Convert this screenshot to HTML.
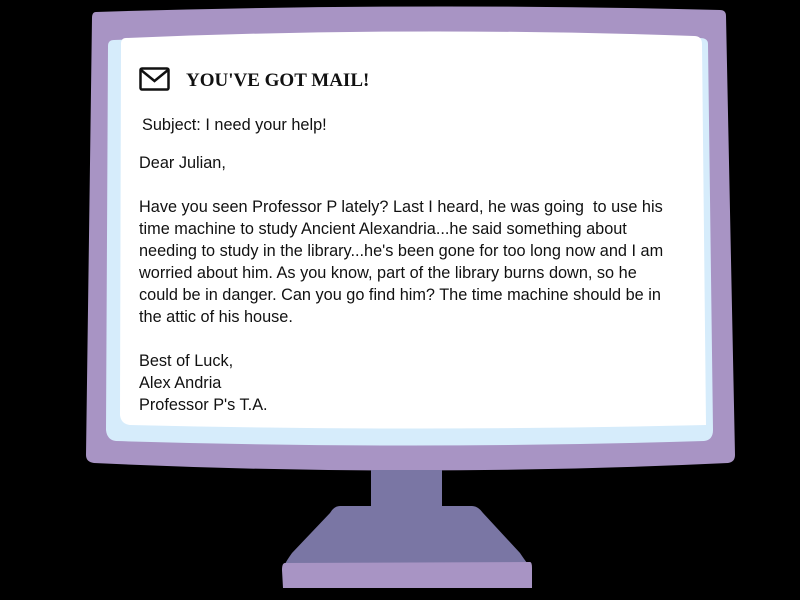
<!DOCTYPE html>
<html><head><style>
html,body{margin:0;padding:0;background:#000;width:800px;height:600px;overflow:hidden}
.t{position:absolute;left:139px;font-family:"Liberation Sans",sans-serif;font-size:16.3px;color:#111;line-height:22px;white-space:pre}
</style></head><body>
<svg width="800" height="600" style="position:absolute;left:0;top:0">
<path d="M96 12 Q92 12 92 18 L86 455 Q86 462 94 463 Q410 478 728 463 Q735 462 735 455 L726 16 Q726 10 720 10 Q410 2 96 12Z" fill="#a894c4"/>
<path d="M114 40 Q108 40 108 46 L106 430 Q107 440 116 441 Q410 450 704 441 Q713 440 713 430 L708 44 Q708 38 700 38 Q410 28 114 40Z" fill="#d6ecfb"/>
<path d="M126 38 Q121 38 121 44 L120 415 Q121 424 130 425 Q410 432 706 425 L702 44 Q702 36 694 36 Q410 26 126 38Z" fill="#fff"/>
<rect x="371" y="470" width="71" height="38" fill="#7a76a4"/>
<path d="M340 506 L472 506 Q478 506 483 513 L520 553 Q526 562 528 564 L285 564 Q287 560 292 553 L330 513 Q334 506 340 506Z" fill="#7a76a4"/>
<path d="M285 563 L530 562 Q532 562 532 568 L532 588 L283 588 L282 570 Q282 563 285 563Z" fill="#a894c4"/>
<rect x="140.5" y="68.5" width="28" height="21" rx="1.5" fill="none" stroke="#111" stroke-width="2.5"/>
<path d="M141 70 L154.5 81 L168 70" fill="none" stroke="#111" stroke-width="2.5"/>
<text x="186" y="86" font-family="Liberation Serif,serif" font-weight="bold" font-size="19" fill="#111">YOU'VE GOT MAIL!</text>
</svg>
<div class="t" style="top:114px;left:142px">Subject: I need your help!</div>
<div class="t" style="top:152px">Dear Julian,

Have you seen Professor P lately? Last I heard, he was going  to use his
time machine to study Ancient Alexandria...he said something about
needing to study in the library...he's been gone for too long now and I am
worried about him. As you know, part of the library burns down, so he
could be in danger. Can you go find him? The time machine should be in
the attic of his house.

Best of Luck,
Alex Andria
Professor P's T.A.</div>
</body></html>
